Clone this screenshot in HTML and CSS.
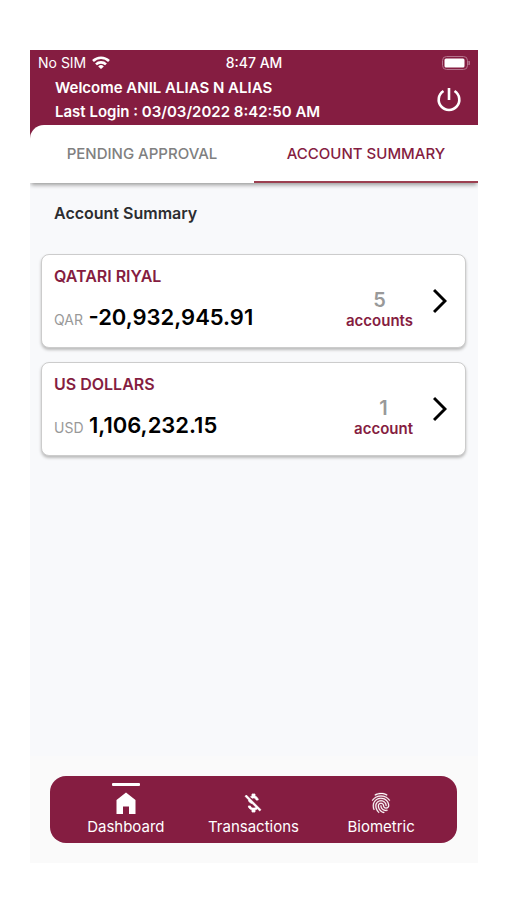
FILE: index.html
```html
<!DOCTYPE html>
<html lang="en">
<head>
<meta charset="utf-8">
<meta name="viewport" content="width=device-width, initial-scale=1">
<title>Account Summary</title>
<link rel="stylesheet" href="styles.css">
</head>
<body>
<div class="app">
  <header class="header">
    <div class="status">
      <div class="carrier">No SIM
        <svg class="wifi" viewBox="0 0 18 13" fill="none" stroke="currentColor" stroke-width="2.600" aria-hidden="true"><path d="M1 5a11.500 11.500 0 0 1 16 0M4 8.400a7.200 7.200 0 0 1 10 0"/><path d="M9 13 6.200 10.400a4 4 0 0 1 5.600 0z" fill="currentColor" stroke="none"/></svg>
      </div>
      <div class="clock">8:47 AM</div>
      <svg class="battery" viewBox="0 0 28 14" aria-hidden="true"><rect x=".5" y=".5" width="25" height="13" rx="4" fill="none" stroke="#b5738c"/><rect x="2.500" y="2.500" width="20" height="9" rx="1.500" fill="#fff"/><path d="M27 5v4q1-2 0-4" fill="#b5738c" stroke="#b5738c"/></svg>
    </div>
    <div class="welcome">
      <div>
        <div>Welcome ANIL ALIAS N ALIAS</div>
        <div>Last Login : 03/03/2022 8:42:50 AM</div>
      </div>
      <button class="power" type="button" aria-label="Log out">
        <svg viewBox="0 0 26 26" fill="none" stroke="currentColor" stroke-width="2.600" aria-hidden="true"><path d="M13 1v12M7.500 4a10.300 10.300 0 1 0 11 0"/></svg>
      </button>
    </div>
  </header>
  <div class="tabs-wrap">
    <nav class="tabs">
      <button class="tab" type="button">PENDING APPROVAL</button>
      <button class="tab active" type="button">ACCOUNT SUMMARY</button>
    </nav>
  </div>
  <main class="content">
    <h1 class="title">Account Summary</h1>
    <button class="card" type="button">
      <span class="balance">
        <span class="currency">QATARI RIYAL</span>
        <span class="amount"><span class="code">QAR</span> -20,932,945.91</span>
      </span>
      <span class="count"><span class="number">5</span><span class="unit">accounts</span></span>
      <svg class="chevron" viewBox="0 0 14 26" aria-hidden="true"><path d="M1 2l11 11L1 24" fill="none" stroke="currentColor" stroke-width="3"/></svg>
    </button>
    <button class="card" type="button">
      <span class="balance">
        <span class="currency">US DOLLARS</span>
        <span class="amount"><span class="code">USD</span> 1,106,232.15</span>
      </span>
      <span class="count"><span class="number">1</span><span class="unit">account</span></span>
      <svg class="chevron" viewBox="0 0 14 26" aria-hidden="true"><path d="M1 2l11 11L1 24" fill="none" stroke="currentColor" stroke-width="3"/></svg>
    </button>
  </main>
  <footer class="bottom">
    <nav class="nav">
      <a class="item current" href="#dashboard">
        <svg viewBox="0 0 24 24" fill="currentColor" aria-hidden="true"><path d="M12 1.500 2.500 9v14h6.500v-7.500h6V23h6.500V9z"/></svg>
        Dashboard
      </a>
      <a class="item" href="#transactions">
        <svg viewBox="0 0 24 24" fill="currentColor" aria-hidden="true"><path d="M12.500 6.900c1.780 0 2.440.85 2.500 2.100h2.210c-.07-1.720-1.120-3.300-3.210-3.810V3h-3v2.160c-.53.12-1.030.3-1.480.54l1.470 1.470c.41-.17.91-.27 1.510-.27zM5.330 4.060 4.060 5.330 7.500 8.770c0 2.080 1.560 3.210 3.910 3.910l3.510 3.510c-.34.48-1.050.91-2.420.91-2.060 0-2.870-.92-2.980-2.100h-2.200c.12 2.190 1.760 3.420 3.680 3.830V21h3v-2.150c.96-.18 1.820-.55 2.450-1.120l2.220 2.220 1.270-1.270z" stroke="currentColor" stroke-width=".8"/></svg>
        Transactions
      </a>
      <a class="item" href="#biometric">
        <svg viewBox="0 0 24 24" fill="currentColor" stroke="currentColor" stroke-width=".3" aria-hidden="true"><path d="M17.810 4.470c-.08 0-.16-.02-.23-.06C15.660 3.420 14 3 12.010 3c-1.980 0-3.860.47-5.570 1.410-.24.13-.54.04-.68-.2-.13-.24-.04-.55.2-.68C7.820 2.520 9.860 2 12.010 2c2.130 0 3.990.47 6.030 1.520.25.13.34.43.21.67-.09.18-.26.28-.44.28zM3.500 9.720c-.1 0-.2-.03-.29-.09-.23-.16-.28-.47-.12-.7.99-1.400 2.250-2.500 3.750-3.270C9.980 4.040 14 4.030 17.150 5.650c1.500.77 2.760 1.860 3.750 3.250.16.22.11.54-.12.7-.23.16-.54.11-.7-.12-.9-1.260-2.040-2.250-3.390-2.940-2.870-1.470-6.540-1.470-9.400.01-1.360.7-2.500 1.700-3.400 2.960-.08.14-.23.21-.39.21zm6.250 12.070c-.13 0-.26-.05-.35-.15-.87-.87-1.340-1.430-2.010-2.640-.69-1.230-1.050-2.730-1.050-4.340 0-2.970 2.540-5.390 5.660-5.390s5.660 2.420 5.660 5.390c0 .28-.22.5-.5.5s-.5-.22-.5-.5c0-2.420-2.090-4.390-4.660-4.390-2.570 0-4.660 1.970-4.660 4.390 0 1.440.32 2.770.93 3.850.64 1.150 1.080 1.640 1.850 2.420.19.2.19.51 0 .71-.11.1-.24.15-.37.15zm7.170-1.850c-1.190 0-2.240-.3-3.100-.89-1.490-1.010-2.380-2.650-2.380-4.390 0-.28.22-.5.5-.5s.5.22.5.5c0 1.410.72 2.740 1.940 3.560.71.48 1.540.71 2.540.71.24 0 .64-.03 1.040-.1.27-.05.53.13.58.41.05.27-.13.53-.41.58-.57.11-1.070.12-1.210.12zM14.910 22c-.04 0-.09-.01-.13-.02-1.590-.44-2.630-1.030-3.720-2.100-1.400-1.390-2.170-3.240-2.170-5.220 0-1.620 1.380-2.940 3.080-2.940 1.700 0 3.080 1.320 3.080 2.940 0 1.070.93 1.940 2.080 1.940s2.080-.87 2.080-1.940c0-3.770-3.250-6.830-7.250-6.830-2.840 0-5.440 1.580-6.610 4.030-.39.81-.59 1.760-.59 2.800 0 .78.07 2.010.67 3.610.1.26-.03.55-.29.64-.26.1-.55-.04-.64-.29-.49-1.310-.73-2.610-.73-3.960 0-1.200.23-2.290.68-3.240 1.330-2.790 4.280-4.600 7.510-4.600 4.550 0 8.250 3.510 8.250 7.830 0 1.620-1.380 2.940-3.080 2.940s-3.080-1.320-3.080-2.940c0-1.070-.93-1.940-2.080-1.940s-2.080.87-2.080 1.940c0 1.710.66 3.310 1.870 4.510.95.94 1.860 1.460 3.270 1.850.27.07.42.35.35.61-.05.23-.26.38-.47.38z"/></svg>
        Biometric
      </a>
    </nav>
  </footer>
</div>
</body>
</html>
```
FILE: styles.css
```css
:root {
  --maroon: #851d41;
}

* {
  box-sizing: border-box;
}

body {
  margin: 0;
  min-height: 100vh;
  display: flex;
  padding: 50px 29px 37px 30px;
  background: #fff;
  font-family: Inter, "Liberation Sans", sans-serif;
}

button {
  border: 0;
  padding: 0;
  background: none;
  font: inherit;
  cursor: pointer;
}

svg {
  display: block;
}

.app {
  flex: 1;
  display: flex;
  flex-direction: column;
  background: #f8f9fb;
}

.header {
  background: var(--maroon);
  color: #fff;
}

.status {
  display: grid;
  grid-template-columns: 1fr auto 1fr;
  align-items: center;
  height: 25px;
  padding: 0 8px;
  font-size: 14px;
}

.carrier {
  display: flex;
  align-items: center;
  gap: 6px;
}

.wifi {
  width: 18px;
  height: 13px;
}

.clock {
  font-weight: 500;
}

.battery {
  justify-self: end;
  width: 28px;
  height: 14px;
}

.welcome {
  display: flex;
  justify-content: space-between;
  align-items: center;
  height: 50px;
  padding: 0 16px 0 25px;
  font-size: 15px;
  font-weight: 600;
  line-height: 24px;
}

.power {
  color: #fff;
}

.power svg {
  width: 26px;
  height: 26px;
}

.tabs-wrap {
  background: linear-gradient(var(--maroon) 14px, transparent 14px);
}

.tabs {
  display: grid;
  grid-template-columns: 1fr 1fr;
  height: 58px;
  border-top-left-radius: 14px;
  background: #fff;
  box-shadow: 0 3px 4px -1px #999;
  clip-path: inset(0 0 -8px 0);
}

.tab {
  border-bottom: 2px solid transparent;
  color: #808080;
  font-size: 15px;
  font-weight: 500;
}

.tab.active {
  border-color: #9c4050;
  color: var(--maroon);
}

.content {
  flex: 1;
  display: flex;
  flex-direction: column;
  gap: 14px;
  padding: 20px 12px 0 11px;
}

.title {
  margin: 0 0 17px;
  padding-left: 13px;
  color: #2c2d30;
  font-size: 16px;
  font-weight: 600;
  line-height: 20px;
}

.card {
  display: flex;
  align-items: center;
  min-height: 94px;
  padding: 0 18px 0 12px;
  border: 1px solid #ccc;
  border-radius: 8px;
  background: #fff;
  box-shadow: 0 2px 3px #bbb;
  text-align: left;
}

.balance {
  flex: 1;
  display: grid;
  gap: 18px;
  padding-bottom: 3px;
}

.currency {
  color: var(--maroon);
  font-size: 16px;
  font-weight: 600;
  line-height: 20px;
}

.amount {
  color: #000;
  font-size: 22px;
  font-weight: 600;
  line-height: 26px;
}

.code {
  color: #999;
  font-size: 14px;
  font-weight: 400;
}

.count {
  display: grid;
  justify-items: center;
  margin: 18px 20px 0 0;
}

.number {
  color: #999;
  font-size: 20px;
  font-weight: 600;
  line-height: 22px;
}

.unit {
  color: var(--maroon);
  font-size: 15px;
  font-weight: 600;
  line-height: 20px;
}

.chevron {
  width: 14px;
  height: 26px;
  color: #000;
}

.bottom {
  padding: 20px 21px 20px 20px;
  background: #fafafa;
}

.nav {
  display: grid;
  grid-template-columns: repeat(3, 1fr);
  padding: 0 12px;
  border-radius: 16px;
  background: var(--maroon);
}

.item {
  display: flex;
  flex-direction: column;
  align-items: center;
  height: 67px;
  padding-top: 7px;
  color: #fff;
  font-size: 15px;
  line-height: 20px;
  text-decoration: none;
}

.item::before {
  content: "";
  width: 28px;
  height: 3px;
  margin-bottom: 5px;
  border-radius: 1px;
}

.item.current::before {
  background: #fff;
}

.item svg {
  width: 24px;
  height: 24px;
  margin-bottom: 2px;
}
```
